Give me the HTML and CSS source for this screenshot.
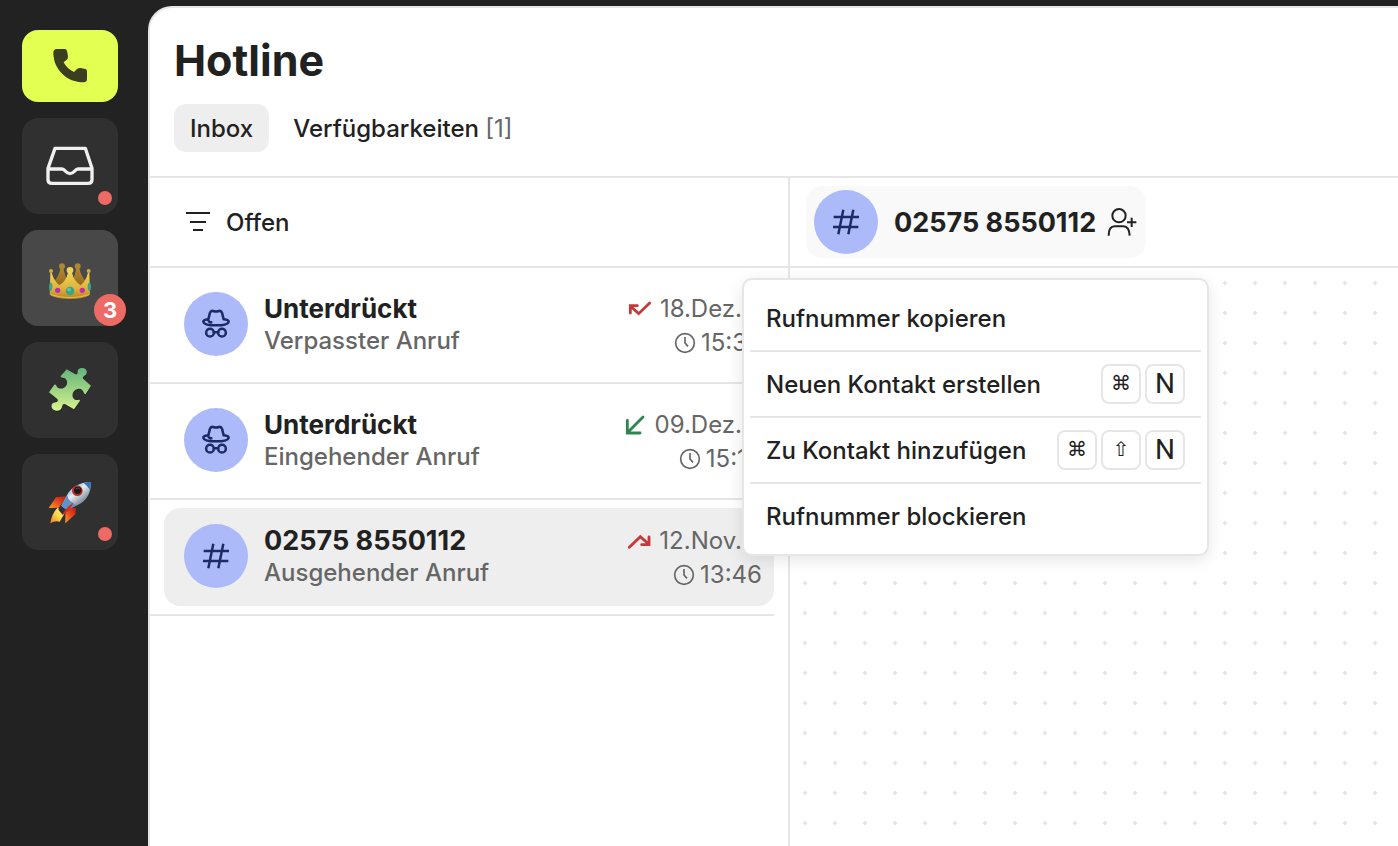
FILE: index.html
```
<!DOCTYPE html>
<html lang="de">
<head>
<meta charset="utf-8">
<meta name="viewport" content="width=device-width, initial-scale=1">
<title>Hotline</title>
<link rel="stylesheet" href="styles.css">
</head>
<body>
<div class="app">
  <nav class="sidebar" aria-label="Bereiche">
    <button class="nav-button nav-button-phone" type="button" aria-label="Hotline">
      <svg class="icon-phone" viewBox="156 144 108 108" aria-hidden="true"><path d="M160 158Q160 147 171 147H194Q200 147 201 153L204 168Q204 174 202 178L191 187Q200 206 222 216L231 207Q236 203 242 204L256 207Q261 208 261 214V237Q261 247 251 247C201 247 160 208 160 158Z" fill="#3b3f20"/></svg>
    </button>
    <button class="nav-button" type="button" aria-label="Posteingang">
      <svg class="icon-nav" viewBox="138 426 144 144" aria-hidden="true"><path d="M165 445H256L276 505V539Q276 550 264 550H156Q144 550 144 539V505ZM144 507H186C196 507 196 521 210 521S224 507 234 507H276" fill="none" stroke="#f0f0f0" stroke-width="10" stroke-linejoin="round"/></svg>
      <span class="dot"></span>
    </button>
    <button class="nav-button nav-button-active" type="button" aria-label="Krone, 3 neue">
      <svg class="icon-nav" viewBox="108 102 144 144" aria-hidden="true">
        <defs>
          <linearGradient id="gold" x1="0" y1="0" x2="0" y2="1"><stop offset="0" stop-color="#f0d355"/><stop offset=".6" stop-color="#dfb23c"/><stop offset="1" stop-color="#b98222"/></linearGradient>
          <linearGradient id="gold-back" x1="0" y1="0" x2="0" y2="1"><stop offset="0" stop-color="#b98a2c"/><stop offset="1" stop-color="#8b651c"/></linearGradient>
        </defs>
        <path d="M152 142Q148 166 134 182L140 204H220L226 182Q212 166 207 142H199Q196 166 186 182H174Q163 166 160 142Z" fill="url(#gold-back)"/>
        <circle cx="156" cy="139" r="9" fill="#b08634"/><circle cx="203" cy="139" r="9" fill="#b08634"/>
        <path d="M121 158L119 224Q140 237 180 237T240 224L238 158H234Q228 182 212 196Q192 184 186 158H174Q168 184 148 196Q132 182 125 158Z" fill="url(#gold)"/>
        <path d="M122 224Q150 233 180 233T237 224" fill="none" stroke="#f3d467" stroke-width="2"/>
        <circle cx="180" cy="151" r="10" fill="#f0d355"/><circle cx="123" cy="153" r="6" fill="#d5ac40"/><circle cx="236" cy="153" r="6" fill="#d5ac40"/>
        <ellipse cx="180" cy="213" rx="13" ry="13" fill="#3aa486"/><ellipse cx="177" cy="209" rx="6" ry="5" fill="#63c4a4"/>
        <circle cx="143" cy="211" r="8" fill="#c12fa6"/><circle cx="217" cy="211" r="8" fill="#c12fa6"/>
        <ellipse cx="122" cy="200" rx="5" ry="12" fill="#3aa486"/><ellipse cx="238" cy="200" rx="5" ry="12" fill="#3aa486"/>
      </svg>
      <span class="badge">3</span>
    </button>
    <button class="nav-button" type="button" aria-label="Erweiterungen">
      <svg class="icon-nav" viewBox="108 93 144 144" aria-hidden="true">
        <defs><linearGradient id="puzzle" x1="0" y1="0" x2="0" y2="1"><stop offset="0" stop-color="#62b47c"/><stop offset=".5" stop-color="#9cd383"/><stop offset="1" stop-color="#d9f58f"/></linearGradient></defs>
        <path d="M170 103L196 118Q204 120 203 111C203 101 210 99 217 99C226 99 232 106 230 114C229 121 222 122 219 126Q217 130 221 133L243 152L227 177Q225 179 222 174C218 162 208 158 197 164C186 171 185 185 192 192C196 196 202 195 208 194Q211 195 209 199L192 223L166 208Q158 205 157 212C156 222 148 228 139 227C129 226 123 218 125 210C127 202 136 202 142 200Q146 196 142 192L117 172L133 149Q137 147 139 152C143 161 153 163 162 158C171 153 174 142 169 134C165 128 160 130 153 127Q151 125 153 122Z" fill="#202a1d" transform="translate(1 3)"/>
        <path d="M170 103L196 118Q204 120 203 111C203 101 210 99 217 99C226 99 232 106 230 114C229 121 222 122 219 126Q217 130 221 133L243 152L227 177Q225 179 222 174C218 162 208 158 197 164C186 171 185 185 192 192C196 196 202 195 208 194Q211 195 209 199L192 223L166 208Q158 205 157 212C156 222 148 228 139 227C129 226 123 218 125 210C127 202 136 202 142 200Q146 196 142 192L117 172L133 149Q137 147 139 152C143 161 153 163 162 158C171 153 174 142 169 134C165 128 160 130 153 127Q151 125 153 122Z" fill="url(#puzzle)"/>
      </svg>
    </button>
    <button class="nav-button" type="button" aria-label="Start">
      <svg class="icon-nav" viewBox="108 99 144 144" aria-hidden="true">
        <defs>
          <linearGradient id="hull" x1="170" y1="125" x2="215" y2="180" gradientUnits="userSpaceOnUse"><stop offset="0" stop-color="#5d9bd4"/><stop offset=".45" stop-color="#e8eef2"/><stop offset="1" stop-color="#6d7d8c"/></linearGradient>
          <linearGradient id="fin" x1="0" y1="1" x2="1" y2="0"><stop offset="0" stop-color="#f5a623"/><stop offset=".5" stop-color="#e8481d"/><stop offset="1" stop-color="#b81c10"/></linearGradient>
          <linearGradient id="flame" x1="1" y1="0" x2="0" y2="1"><stop offset="0" stop-color="#fff7b0"/><stop offset=".5" stop-color="#ffd84a"/><stop offset="1" stop-color="#ef7a1a"/></linearGradient>
        </defs>
        <path d="M170 154L138 157L116 189L147 188Z" fill="url(#fin)"/>
        <path d="M172 190L198 188L196 208L166 235L166 208Z" fill="url(#fin)"/>
        <path d="M143 188L164 205L149 230Q134 226 121 235Q125 206 143 188Z" fill="url(#flame)"/>
        <path d="M152 180L170 196L158 209L145 194Z" fill="#2d3036"/>
        <path d="M243 111C208 111 182 128 171 151L154 182L170 195L201 181C229 170 243 145 243 111Z" fill="url(#hull)"/>
        <path d="M171 151L154 182L170 195L201 181Q177 172 171 151Z" fill="#5f92c7"/>
        <path d="M243 111Q231 110 220 113Q232 122 240 134Q243 122 243 111Z" fill="#3474b9"/>
        <path d="M191 172Q170 186 155 211Q179 202 191 172Z" fill="#d42c1a"/>
        <circle cx="202" cy="137" r="16" fill="#c42922"/><circle cx="203" cy="136" r="11" fill="#17191d"/><path d="M197 132Q203 126 209 131" fill="none" stroke="#69798a" stroke-width="2"/>
      </svg>
      <span class="dot"></span>
    </button>
  </nav>

  <main class="panel">
    <header class="page-head">
      <h1 class="title">Hotline</h1>
      <div class="tabs">
        <button class="tab tab-active" type="button">Inbox</button>
        <button class="tab" type="button">Verfügbarkeiten <span class="count">[1]</span></button>
      </div>
    </header>

    <div class="columns">
      <section class="list-pane">
        <div class="bar">
          <button class="filter" type="button">
            <svg class="icon-small" viewBox="0 0 24 24" aria-hidden="true"><path d="M0 2H24M4 11H20M7 19H17" stroke="#212121" stroke-width="2"/></svg>
            Offen
          </button>
        </div>
        <ul class="calls">
          <li class="call-row">
            <button class="call" type="button">
              <span class="avatar"><svg class="icon-avatar" viewBox="150 144 96 96" aria-hidden="true"><g fill="none" stroke="#1c2a66" stroke-width="7.5" stroke-linecap="round" stroke-linejoin="round"><path d="M175 178L180 158Q183 151 189 153Q198 156 207 153Q213 151 216 158L221 178M174 178Q160 180 160 185Q162 196 198 196T236 185Q236 180 222 178M174 180Q178 188 184 187"/><circle cx="180" cy="218" r="11.5"/><circle cx="216" cy="218" r="11.5"/><path d="M192 217H204"/></g></svg></span>
              <span class="who"><span class="name">Unterdrückt</span><span class="kind">Verpasster Anruf</span></span>
              <span class="when">
                <span class="date"><svg class="icon-small" viewBox="78 79 72 72" aria-hidden="true"><path d="M143 97L110 129L85 106M106 105H85V127" fill="none" stroke="#c43a3a" stroke-width="8.5" stroke-linecap="round"/></svg>18.Dez.</span>
                <span class="time"><svg class="icon-small" viewBox="213 180 72 72" aria-hidden="true"><path d="M249 198V216L258 226" fill="none" stroke="#666" stroke-width="5"/><circle cx="249" cy="216" r="28" fill="none" stroke="#666" stroke-width="5"/></svg>15:36</span>
              </span>
            </button>
          </li>
          <li class="call-row">
            <button class="call" type="button">
              <span class="avatar"><svg class="icon-avatar" viewBox="150 144 96 96" aria-hidden="true"><g fill="none" stroke="#1c2a66" stroke-width="7.5" stroke-linecap="round" stroke-linejoin="round"><path d="M175 178L180 158Q183 151 189 153Q198 156 207 153Q213 151 216 158L221 178M174 178Q160 180 160 185Q162 196 198 196T236 185Q236 180 222 178M174 180Q178 188 184 187"/><circle cx="180" cy="218" r="11.5"/><circle cx="216" cy="218" r="11.5"/><path d="M192 217H204"/></g></svg></span>
              <span class="who"><span class="name">Unterdrückt</span><span class="kind">Eingehender Anruf</span></span>
              <span class="when">
                <span class="date"><svg class="icon-small" viewBox="66 426 72 72" aria-hidden="true"><path d="M126 438L79 485M79 448V486H117" fill="none" stroke="#2f8550" stroke-width="8.5" stroke-linecap="round"/></svg>09.Dez.</span>
                <span class="time"><svg class="icon-small" viewBox="213 180 72 72" aria-hidden="true"><path d="M249 198V216L258 226" fill="none" stroke="#666" stroke-width="5"/><circle cx="249" cy="216" r="28" fill="none" stroke="#666" stroke-width="5"/></svg>15:10</span>
              </span>
            </button>
          </li>
          <li class="call-row">
            <button class="call call-active" type="button">
              <span class="avatar"><svg class="icon-avatar" viewBox="150 150 96 96" aria-hidden="true"><path d="M161 183H237M159 213H235M190 161L175 235M220 161L205 235" stroke="#1c2a66" stroke-width="7.5"/></svg></span>
              <span class="who"><span class="name">02575 8550112</span><span class="kind">Ausgehender Anruf</span></span>
              <span class="when">
                <span class="date"><svg class="icon-small" viewBox="84 772 72 72" aria-hidden="true"><path d="M91 827L124 795L149 817M150 796V819H128" fill="none" stroke="#c43a3a" stroke-width="8.5" stroke-linecap="round"/></svg>12.Nov.</span>
                <span class="time"><svg class="icon-small" viewBox="213 180 72 72" aria-hidden="true"><path d="M249 198V216L258 226" fill="none" stroke="#666" stroke-width="5"/><circle cx="249" cy="216" r="28" fill="none" stroke="#666" stroke-width="5"/></svg>13:46</span>
              </span>
            </button>
          </li>
        </ul>
      </section>

      <section class="detail-pane">
        <div class="bar bar-detail">
          <div class="contact">
            <button class="chip" type="button" aria-haspopup="menu" aria-expanded="true">
              <span class="avatar"><svg class="icon-avatar" viewBox="150 150 96 96" aria-hidden="true"><path d="M161 183H237M159 213H235M190 161L175 235M220 161L205 235" stroke="#1c2a66" stroke-width="7.5"/></svg></span>
              <span class="name chip-name">02575 8550112</span>
              <svg class="icon-avatar" viewBox="978 108 96 96" aria-hidden="true"><g fill="none" stroke="#212121" stroke-width="6"><circle cx="1017" cy="137" r="20"/><path d="M986 197C986 178 992 169 1004 169H1030C1042 169 1048 178 1049 197M1055 143V171M1041 157H1069"/></g></svg>
            </button>
            <div class="menu" role="menu">
              <button class="menu-item" type="button" role="menuitem">Rufnummer kopieren</button>
              <button class="menu-item" type="button" role="menuitem">Neuen Kontakt erstellen <span class="keys"><kbd class="key key-symbol">⌘</kbd><kbd class="key">N</kbd></span></button>
              <button class="menu-item" type="button" role="menuitem">Zu Kontakt hinzufügen <span class="keys"><kbd class="key key-symbol">⌘</kbd><kbd class="key key-symbol">⇧</kbd><kbd class="key">N</kbd></span></button>
              <button class="menu-item" type="button" role="menuitem">Rufnummer blockieren</button>
            </div>
          </div>
        </div>
        <div class="canvas"></div>
      </section>
    </div>
  </main>
</div>
</body>
</html>
```

FILE: styles.css
```
* {
  box-sizing: border-box;
}

body {
  margin: 0;
  background: #222;
  color: #212121;
  font: 500 24px/32px Inter, "Liberation Sans", sans-serif;
}

button {
  padding: 0;
  border: 0;
  background: none;
  color: inherit;
  font: inherit;
  text-align: left;
  cursor: pointer;
}

svg {
  display: block;
  flex: none;
}

.app {
  display: flex;
  min-height: 100vh;
  overflow: hidden;
}

.sidebar {
  display: flex;
  flex: none;
  flex-direction: column;
  gap: 16px;
  padding: 30px 30px 30px 22px;
}

.nav-button {
  position: relative;
  display: grid;
  place-items: center;
  width: 96px;
  height: 96px;
  border-radius: 16px;
  background: #303030;
}

.nav-button-phone {
  height: 72px;
  background: #e3ff52;
}

.nav-button-active {
  background: #484848;
}

.icon-phone {
  width: 36px;
  height: 36px;
}

.icon-nav {
  width: 48px;
  height: 48px;
}

.icon-small {
  width: 24px;
  height: 24px;
}

.icon-avatar {
  width: 32px;
  height: 32px;
}

.dot {
  position: absolute;
  right: 6px;
  bottom: 9px;
  width: 14px;
  height: 14px;
  border-radius: 50%;
  background: #ee6a65;
}

.badge {
  position: absolute;
  right: -8px;
  bottom: 0;
  width: 32px;
  height: 32px;
  border-radius: 50%;
  background: #ee6a65;
  color: #fff;
  font-size: 22px;
  font-weight: 700;
  text-align: center;
}

.panel {
  display: flex;
  flex: 1;
  flex-direction: column;
  min-width: 0;
  margin-top: 6px;
  border: solid #e6e6e6;
  border-width: 2px 0 0 2px;
  border-radius: 24px 0 0 0;
  background: #fff;
}

.page-head {
  padding: 24px;
  border-bottom: 2px solid #e6e6e6;
}

.title {
  margin: 0 0 16px;
  font-size: 43px;
  font-weight: 700;
  line-height: 56px;
}

.tabs {
  display: flex;
  gap: 8px;
}

.tab {
  padding: 9px 16px 7px;
  border-radius: 12px;
}

.tab-active {
  background: #eee;
}

.count {
  color: #666;
  font-weight: 400;
}

.columns {
  display: flex;
  flex: 1;
}

.list-pane {
  flex: 0 0 640px;
  border-right: 2px solid #e6e6e6;
}

.detail-pane {
  display: flex;
  flex: 1;
  flex-direction: column;
  min-width: 0;
}

.bar {
  display: flex;
  align-items: center;
  height: 90px;
  padding: 2px 36px 0;
  border-bottom: 2px solid #e6e6e6;
}

.bar-detail {
  padding: 0 16px;
}

.filter {
  display: flex;
  align-items: center;
  gap: 16px;
}

.calls {
  margin: 0 14px 0 0;
  padding: 0;
  list-style: none;
}

.call-row {
  padding: 8px 0 8px 14px;
  border-bottom: 2px solid #e6e6e6;
}

.call {
  display: flex;
  align-items: center;
  gap: 16px;
  width: 100%;
  padding: 15px 12px 15px 20px;
  border-radius: 16px;
}

.call-active {
  background: #eee;
}

.avatar {
  display: grid;
  flex: none;
  place-items: center;
  width: 64px;
  height: 64px;
  border-radius: 50%;
  background: #adbaf9;
}

.call .avatar {
  margin-bottom: 2px;
}

.who {
  display: flex;
  flex: 1;
  flex-direction: column;
}

.name {
  font-size: 27px;
  font-weight: 700;
}

.kind {
  color: #666;
}

.call .name {
  font-size: 26px;
}

.call-active .name,
.chip .name {
  font-size: 27px;
}

.when {
  display: flex;
  flex-direction: column;
  align-items: flex-end;
  gap: 2px;
  padding-top: 2px;
  color: #666;
  font-weight: 400;
}

.date,
.time {
  display: flex;
  align-items: center;
}

.date {
  gap: 8px;
  padding-right: 20px;
}

.time {
  gap: 4px;
}

.contact {
  position: relative;
}

.chip {
  display: flex;
  align-items: center;
  gap: 8px;
  padding: 4px 8px;
  border-radius: 16px;
  background: #f9f9f9;
}

.chip-name {
  padding: 2px 2px 0 8px;
}

.menu {
  position: absolute;
  top: 92px;
  left: -64px;
  z-index: 1;
  width: 467px;
  padding: 6px;
  border: 2px solid #e6e6e6;
  border-radius: 10px;
  background: #fff;
  box-shadow: 0 4px 16px rgba(0, 0, 0, 0.1);
}

.menu-item {
  display: flex;
  align-items: center;
  justify-content: space-between;
  width: 100%;
  height: 64px;
  padding: 2px 16px 0;
}

.menu-item + .menu-item {
  height: 66px;
  border-top: 2px solid #e6e6e6;
}

.keys {
  display: flex;
  gap: 4px;
  padding-bottom: 2px;
}

.key {
  width: 40px;
  height: 40px;
  border: 2px solid #e6e6e6;
  border-radius: 8px;
  font: 400 28px/36px Roboto, sans-serif;
  text-align: center;
}

.key-symbol {
  font: 400 20px/34px "DejaVu Sans", sans-serif;
}

.canvas {
  flex: 1;
  background: radial-gradient(circle, #e6e6e6 2px, transparent 2px) 0 0 / 30px 30px;
}
```
